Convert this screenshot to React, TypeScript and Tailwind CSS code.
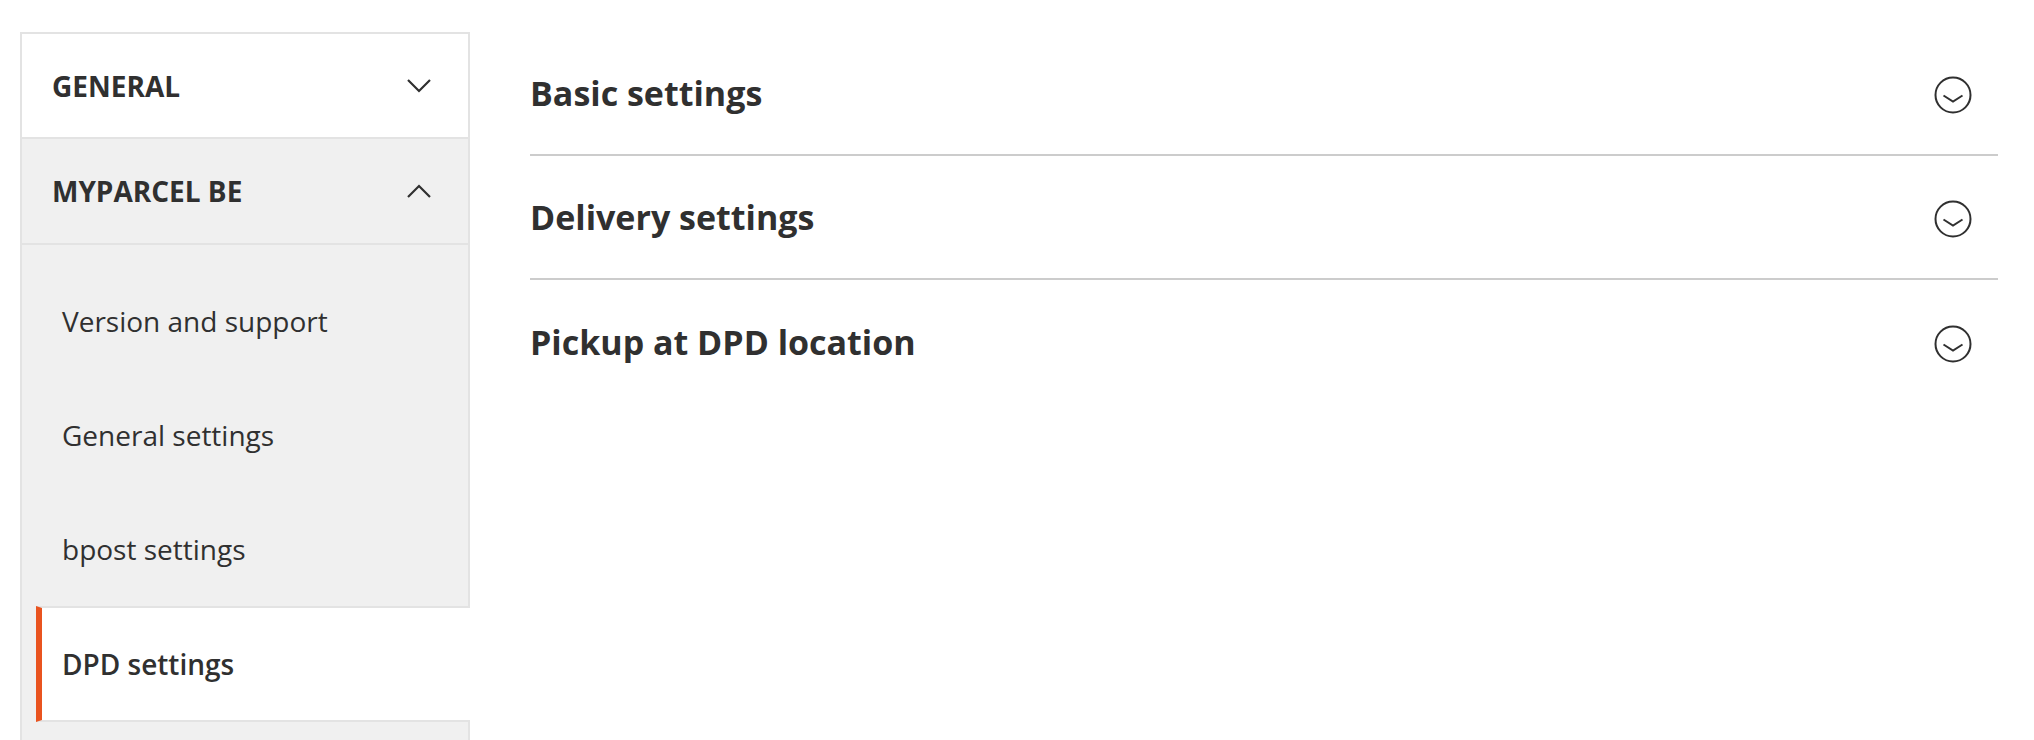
import { ChevronDown, ChevronUp } from 'lucide-react';

const subItems = ['Version and support', 'General settings', 'bpost settings'];
const sections = ['Basic settings', 'Delivery settings', 'Pickup at DPD location'];

function NavChevron({ up }: { up?: boolean }) {
  return (
    <svg width="24" height="14" viewBox="0 0 24 14" fill="none" stroke="#303030" strokeWidth="2.2">
      {up ? <path d="M1 13 L12 2 L23 13" /> : <path d="M1 1 L12 12 L23 1" />}
    </svg>
  );
}

function CircleChevron() {
  return (
    <svg className="mt-[3px]" width="38" height="38" viewBox="0 0 38 38" fill="none" stroke="#303030" strokeWidth="2">
      <circle cx="19" cy="19" r="17.5" />
      <path d="M9.5 19.5 L19 25.5 L28.5 19.5" />
    </svg>
  );
}

export default function App() {
  return (
    <div className="flex min-h-screen bg-white pt-[32px] pl-[20px] pr-[36px] font-['Open_Sans',sans-serif] text-[#303030]">
      {/* Sidebar */}
      <aside className="w-[450px] shrink-0 self-start border-2 border-b-0 border-[#e3e3e3]">
        <div className="flex h-[105px] items-center justify-between border-b-2 border-[#e3e3e3] bg-white pl-[30px] pr-[37px]">
          <span className="text-[28px] font-bold uppercase leading-none">General</span>
          <NavChevron />
        </div>
        <div className="flex h-[106px] items-center justify-between border-b-2 border-[#e3e3e3] bg-[#f0f0f0] pl-[30px] pr-[37px]">
          <span className="text-[28px] font-bold uppercase leading-none">MyParcel BE</span>
          <NavChevron up />
        </div>
        <div className="bg-[#f0f0f0] pt-[19px]">
          {subItems.map(item => (
            <div key={item} className="flex h-[114px] items-center pl-[40px] text-[28px] leading-none">
              {item}
            </div>
          ))}
          <div className="-mr-[2px] ml-[14px] flex h-[116px] items-center border-y-2 border-l-[6px] border-[#e3e3e3] border-l-[#e9531f] bg-white pl-[20px] text-[28px] font-semibold leading-none">
            DPD settings
          </div>
          <div className="h-[120px]" />
        </div>
      </aside>

      {/* Sections */}
      <main className="ml-[60px] flex-1">
        {sections.map((title, i) => (
          <div
            key={title}
            className={`flex h-[124px] items-center justify-between pr-[26px] ${i < sections.length - 1 ? 'border-b-2 border-[#cccccc]' : ''}`}
          >
            <h2 className="text-[34px] font-bold leading-none">{title}</h2>
            <CircleChevron />
          </div>
        ))}
      </main>
    </div>
  );
}
